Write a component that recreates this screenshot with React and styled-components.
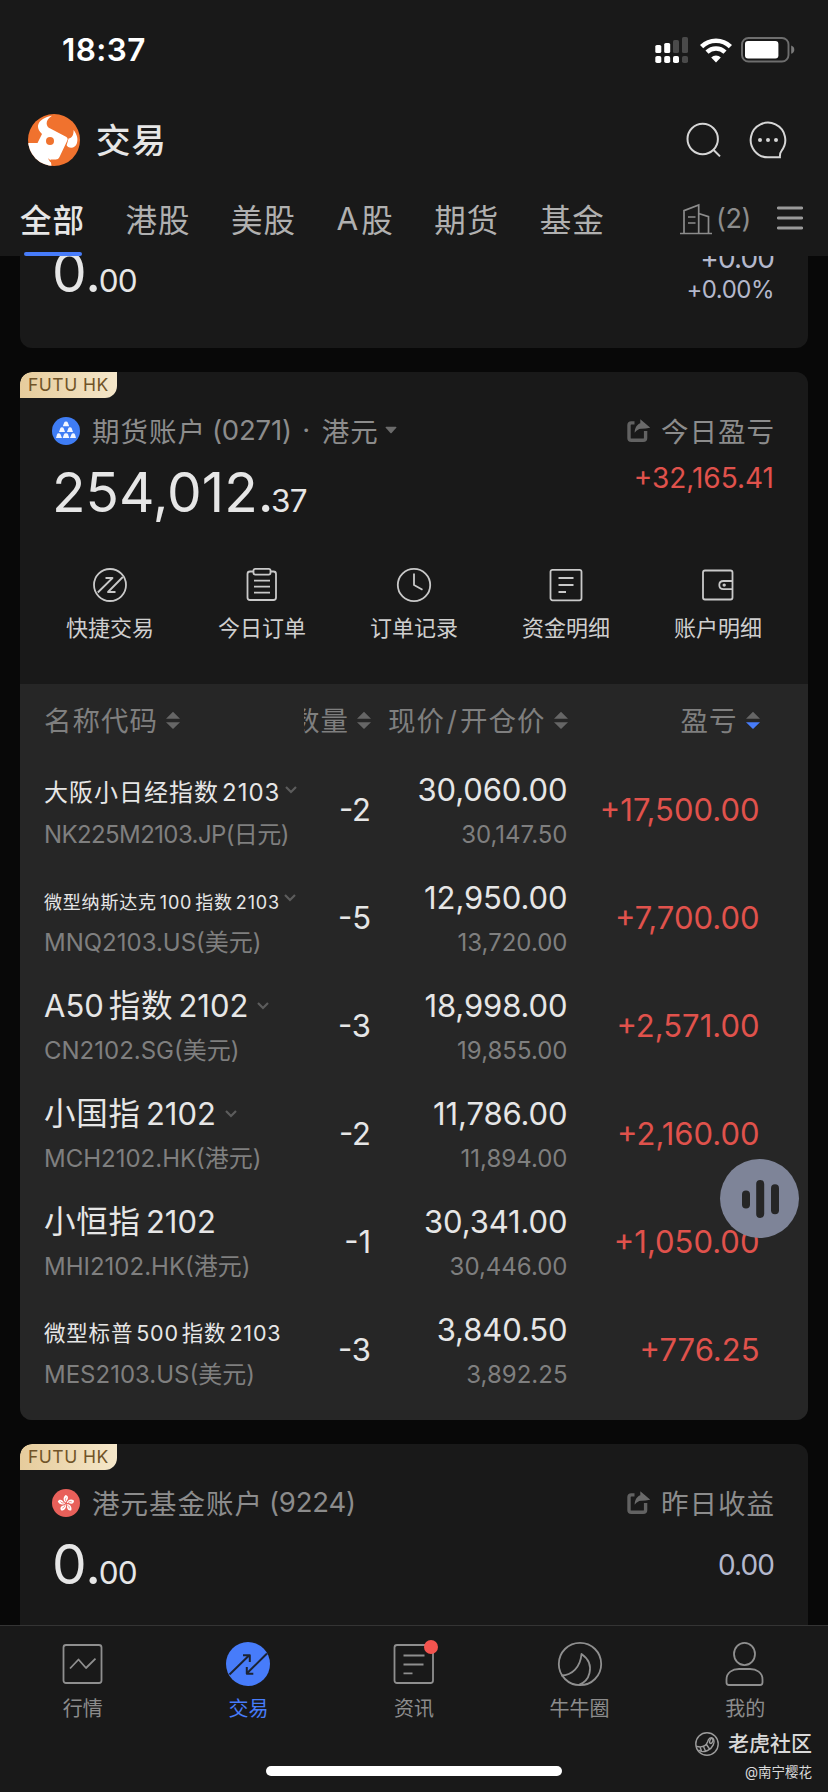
import React from 'react'
import styled, { createGlobalStyle, css } from 'styled-components'

const colours = {
  page: '#080808',
  panel: '#191919',
  table: '#262626',
  text: '#e6e6e6',
  muted: '#8c8c8c',
  flat: '#b4b8cc',
  up: '#e0524c',
  accent: '#477cfa',
}

const positions = [
  { name: '大阪小日经指数2103', size: 24, gap: 3, spacing: 1, menu: true, code: 'NK225M2103.JP(日元)', tight: true, qty: '-2', price: '30,060.00', cost: '30,147.50', pnl: '+17,500.00' },
  { name: '微型纳斯达克100指数2103', size: 18, gap: 3, spacing: 0.8, menu: true, code: 'MNQ2103.US(美元)', qty: '-5', price: '12,950.00', cost: '13,720.00', pnl: '+7,700.00' },
  { name: 'A50指数2102', size: 31.5, gap: 5, spacing: 0.8, menu: true, code: 'CN2102.SG(美元)', qty: '-3', price: '18,998.00', cost: '19,855.00', pnl: '+2,571.00' },
  { name: '小国指2102', size: 31.5, gap: 5, spacing: 0.8, menu: true, code: 'MCH2102.HK(港元)', qty: '-2', price: '11,786.00', cost: '11,894.00', pnl: '+2,160.00' },
  { name: '小恒指2102', size: 31.5, gap: 5, spacing: 0.8, menu: false, code: 'MHI2102.HK(港元)', qty: '-1', price: '30,341.00', cost: '30,446.00', pnl: '+1,050.00' },
  { name: '微型标普500指数2103', size: 21.5, gap: 3, spacing: 0.8, menu: false, code: 'MES2103.US(美元)', qty: '-3', price: '3,840.50', cost: '3,892.25', pnl: '+776.25' },
]

// puts a little air between chinese characters and the digits beside them
const MixedText = ({ children, gap, large }) => (
  children.split(/([\x20-\x7e]+)/).filter(Boolean).map((run, i) => (
    /^[\x20-\x7e]/.test(run) ? <Latin key={i} $gap={gap} $large={large} $first={i === 0}>{run}</Latin> : <span key={i}>{run}</span>
  ))
)

const SignalIcon = () => (
  <svg width="34" height="28" viewBox="0 0 34 28" fill="#fff">
    <rect x="0.3" y="9" width="6" height="8" rx="1.6" />
    <rect x="9.2" y="7" width="6" height="10" rx="1.6" />
    <rect x="18" y="4" width="6" height="13" rx="1.6" fill="#4a4a4a" />
    <rect x="27" y="1" width="6" height="16" rx="1.6" fill="#4a4a4a" />
    <rect x="0.3" y="20" width="6" height="7" rx="1.8" />
    <rect x="9.2" y="20" width="6" height="7" rx="1.8" />
    <rect x="18" y="20" width="6" height="7" rx="1.8" />
    <rect x="27" y="20" width="6" height="7" rx="1.8" fill="#4a4a4a" />
  </svg>
)

const WifiIcon = () => (
  <svg width="32" height="25" viewBox="0 0 32 25" fill="none" stroke="#fff" strokeWidth="4.6">
    <path d="M1.6 8.6a20.6 20.6 0 0 1 28.8 0" />
    <path d="M7 14.2a12.9 12.9 0 0 1 18 0" strokeWidth="4.4" />
    <path d="M16 24.4l-4.8-4.9a6.8 6.8 0 0 1 9.6 0z" fill="#fff" stroke="none" />
  </svg>
)

const BatteryIcon = () => (
  <svg width="54" height="26" viewBox="0 0 54 26">
    <rect x="1" y="1" width="46.5" height="23.5" rx="6.5" fill="none" stroke="#6e6e6e" strokeWidth="1.9" />
    <rect x="4" y="4" width="33.4" height="17.4" rx="3" fill="#fff" />
    <path d="M50.2 8.6c2 .6 3.1 2.2 3.1 4.1s-1.1 3.5-3.1 4.1z" fill="#7a7a7a" />
  </svg>
)

const BullLogo = () => (
  <svg width="52" height="52" viewBox="0 0 52 52">
    <clipPath id="bull"><circle cx="26" cy="26" r="26" /></clipPath>
    <g clipPath="url(#bull)">
      <rect width="52" height="52" fill="#f0722e" />
      <path d="M0 29h9.5l4.5-9C10.5 17 9.3 13.5 10.3 10.5C11.5 6 17 3 24 1.7c-4.5 2.8-6.5 6.8-4.7 10.3c.6 1.3 1.5 2 3 2.6L38 22.8c1.5.8 2 2.2 1.3 3.7L31.5 43c-.8 1.7-2 2.5-3.7 2.5H22.5L23.7 53H0z" fill="#fff" />
      <path d="M40.6 24.6c3.2-.6 5.3-3.6 4.9-8.6c3.5 4.2 4.8 9 3.4 13.2c-1.3 4-5 5.5-8.8 3.8l-1.5-1.8z" fill="#fff" />
      <path d="M20 44c1.5 2.3 4.5 3 8 2.2l-2.5 2.8c-2.6.2-4.5-1.8-5.5-5z" fill="#f0722e" />
      <circle cx="22" cy="27" r="4" fill="#f0722e" />
    </g>
  </svg>
)

const SearchIcon = () => (
  <svg width="36" height="36" viewBox="0 0 36 36" fill="none" stroke="#d6d6d6" strokeWidth="2">
    <circle cx="16.7" cy="17" r="15.2" />
    <path d="M27.6 28l6.4 6.4" />
  </svg>
)

const ChatIcon = () => (
  <svg width="38" height="38" viewBox="0 0 38 38" fill="none" stroke="#d6d6d6" strokeWidth="2">
    <path d="M19 36.3A17.3 17.3 0 1 1 32.5 29.8q-1.8 2-1.6 6.5z" />
    <g fill="#d6d6d6" stroke="none">
      <circle cx="11" cy="19" r="2" />
      <circle cx="19" cy="19" r="2" />
      <circle cx="27" cy="19" r="2" />
    </g>
  </svg>
)

const BuildingIcon = () => (
  <svg width="32" height="32" viewBox="0 0 32 32" fill="none" stroke="#8c8c8c" strokeWidth="1.7">
    <path d="M0 30.5h32M4 30V7.6L18.7 2v28M18.7 10.5l9.8 3.2V30M8 14h7.5M8 20h7.5" />
  </svg>
)

const MenuIcon = () => (
  <svg width="26" height="24" viewBox="0 0 26 24" stroke="#9a9a9a" strokeWidth="2.8" strokeLinecap="round">
    <path d="M1.3 2h23.4M1.3 12h23.4M1.3 22h23.4" />
  </svg>
)

const IngotsIcon = () => (
  <svg width="28" height="28" viewBox="0 0 28 28">
    <circle cx="14" cy="14" r="14" fill="#3f7df5" />
    <g fill="#f2f6ff">
      <path d="M10.8 9.3l1.3-3.6q.4-1.3 1.9-1.3t1.9 1.3l1.3 3.6z" />
      <path d="M7 15l1.2-3.6q.4-1.2 1.8-1.2t1.8 1.2L13 15z" />
      <path d="M15 15l1.2-3.6q.4-1.2 1.8-1.2t1.8 1.2L21 15z" />
      <path d="M4 21l1-3.4q.4-1.3 1.8-1.3T8.6 17.6L10 21z" />
      <path d="M10.7 21l1.2-3.4q.4-1.3 2.1-1.3t2.1 1.3L17.3 21z" />
      <path d="M18 21l1.4-3.4q.4-1.3 1.8-1.3t1.8 1.3L24 21z" />
    </g>
  </svg>
)

const FlowerIcon = () => (
  <svg width="28" height="28" viewBox="0 0 28 28">
    <circle cx="14" cy="14" r="14" fill="#e8605a" />
    {[0, 72, 144, 216, 288].map(deg => (
      <g key={deg} transform={`rotate(${deg} 14 14.5)`}>
        <path d="M14 13.6c-2.8-1.2-3.4-5.2-.4-7.6c1.7.3 2.8 1.8 2.3 3.6c-.4 1.5-1.7 2-1.9 4z" fill="#fff" />
        <path d="M13.9 12.3c-.8-1.3-.6-2.6.3-3.7" stroke="#e8605a" strokeWidth="0.7" fill="none" />
      </g>
    ))}
  </svg>
)

const ShareIcon = () => (
  <svg width="24" height="24" viewBox="0 0 24 24" fill="none">
    <path d="M8.5 3.9H5.3q-2.3 0-2.3 2.3v12.8q0 2.3 2.3 2.3h12q2.3 0 2.3-2.3v-7" stroke="#626262" strokeWidth="3.4" />
    <path d="M14.3 0.3L24.3 8.8q-5.3 1-9.3.9q-3.6.3-6.3 4C8.7 9.5 10.6 5.6 14.3 4.3z" fill="#6a6a6a" />
  </svg>
)

const Caret = () => (
  <svg width="12" height="8" viewBox="0 0 12 8" fill="#6b6b6b"><path d="M0.5 1.5q0-.7.8-.7h9.4q.8 0 .8.7L6.6 7q-.6.6-1.2 0z" /></svg>
)

const SortIcon = ({ desc }) => (
  <svg width="14" height="19" viewBox="0 0 14 19">
    <path d="M7 0.8l7 6.9H0z" fill="#666" />
    <path d="M7 18l7-6.8H0z" fill={desc ? colours.accent : '#666'} />
  </svg>
)

const ChevronIcon = () => (
  <svg width="12" height="8" viewBox="0 0 12 8" fill="none" stroke="#5c5c5c" strokeWidth="2.2"><path d="M1 1l5 5 5-5" /></svg>
)

const ActionIcon = ({ children }) => (
  <svg width="36" height="36" viewBox="0 0 36 36" fill="none" stroke="#c9c9c9" strokeWidth="1.8" strokeLinejoin="round">{children}</svg>
)

const actions = [
  { label: '快捷交易', icon: <><circle cx="18" cy="18" r="16" /><path d="M5.8 25.5L20.5 11h-7M30.8 10L16 25h7.5" /></> },
  { label: '今日订单', icon: <><path d="M10 4.5H6q-2.5 0-2.5 2.5v23.5q0 2.5 2.5 2.5h23.5q2.5 0 2.5-2.5V7q0-2.5-2.5-2.5H26" /><rect x="9.5" y="1.8" width="17" height="5.8" rx="1.8" /><path d="M10 13.7h16M10 19.7h16M10 25.7h16" /></> },
  { label: '订单记录', icon: <><circle cx="18" cy="18" r="16.2" /><path d="M18 6.5V18l8.5 4.8" /></> },
  { label: '资金明细', icon: <><rect x="2.5" y="2.8" width="31" height="30.5" rx="2" /><path d="M10.5 11h15M10.5 18h15M10.5 25h7.5" /></> },
  { label: '账户明细', icon: <><path d="M32.5 14.5V5.5q0-2-2-2H5q-2 0-2 2v25q0 2 2 2h25.5q2 0 2-2v-8.5M32.5 14h-9q-4.2 0-4.2 4.1t4.2 4.1h9zM32.5 14v8" /><circle cx="24.2" cy="18.1" r="0.8" fill="#c9c9c9" /></> },
]

const navItems = [
  { label: '行情', icon: <><rect x="2.5" y="3" width="38" height="38" rx="2.5" /><path d="M9 26.5l8.5-9 7.5 8.5 9.5-9.3" /></> },
  { label: '交易', active: true, icon: <><circle cx="22" cy="22" r="22" fill={colours.accent} stroke="none" /><path d="M3.5 32.5L23.5 13M17 13.2h6.8v6.8M41 11.5L21 31.3M20.8 25v6.8h6.5" stroke="#1c2333" strokeWidth="2" /></> },
  { label: '资讯', badge: true, icon: <><rect x="2.5" y="3" width="38.5" height="38" rx="2.5" /><path d="M11.5 13.5h21M11.5 22.5h20M11.5 31.3h9" /></> },
  { label: '牛牛圈', icon: <><circle cx="22" cy="22" r="21.2" /><path d="M3.3 33.5C14 33.5 22.5 25 23.5 12C30 16.5 33.5 22.5 31.5 31C30 37.5 26.5 41 20.5 43" /></> },
  { label: '我的', icon: <><ellipse cx="21.5" cy="12" rx="10.5" ry="11.2" /><path d="M6 43q-2.5 0-2.5-2.5v-3C3.5 30.5 9.5 27 16 27h11C33.5 27 39.5 30.5 39.5 37.5v3q0 2.5-2.5 2.5z" /></> },
]

const AccountHead = ({ icon, title, caret, label }) => (
  <Head>
    {icon}
    <HeadTitle>{title}{caret && <Caret />}</HeadTitle>
    <HeadLabel><ShareIcon /><span>{label}</span></HeadLabel>
  </Head>
)

const Money = ({ whole, cents }) => (
  <Amount>{whole}.<Cents>{cents}</Cents></Amount>
)

const App = () => (
  <Screen>
    <GlobalStyle />
    <Header>
      <StatusBar>
        <Clock>18:37</Clock>
        <SignalIcon />
        <WifiIcon />
        <BatteryIcon />
      </StatusBar>
      <TitleBar>
        <BullLogo />
        <Title>交易</Title>
        <SearchIcon />
        <ChatIcon />
      </TitleBar>
      <Tabs>
        <Tab $active>全部</Tab>
        <Tab>港股</Tab>
        <Tab>美股</Tab>
        <Tab><TabLetter>A</TabLetter>股</Tab>
        <Tab>期货</Tab>
        <Tab>基金</Tab>
        <Brokers><BuildingIcon /><span>(2)</span></Brokers>
        <MenuIcon />
      </Tabs>
    </Header>

    <Content>
      <Card $cut>
        <Balance>
          <Money whole="0" cents="00" />
          <Change>
            <ChangeValue>+0.00</ChangeValue>
            <ChangeRate>+0.00%</ChangeRate>
          </Change>
        </Balance>
      </Card>

      <Card>
        <Badge>FUTU HK</Badge>
        <AccountHead
          icon={<IngotsIcon />}
          title={<>期货账户<HeadCode>(0271)</HeadCode><Dot>·</Dot>港元</>}
          caret
          label="今日盈亏"
        />
        <Balance>
          <Money whole="254,012" cents="37" />
          <ChangeValue $up>+32,165.41</ChangeValue>
        </Balance>
        <Actions>
          {actions.map(({ label, icon }) => (
            <Action key={label}>
              <ActionIcon>{icon}</ActionIcon>
              <span>{label}</span>
            </Action>
          ))}
        </Actions>
        <Table>
          <TableHead>
            <HeadCell>名称代码<SortIcon /></HeadCell>
            <HeadCell $right><Clipped>数量</Clipped><SortIcon /></HeadCell>
            <HeadCell $right><span>现价<Slash>/</Slash>开仓价</span><SortIcon /></HeadCell>
            <HeadCell $right>盈亏<SortIcon desc /></HeadCell>
          </TableHead>
          {positions.map(item => (
            <Row key={item.code}>
              <Stack>
                <Name $size={item.size} $spacing={item.spacing}>
                  <span><MixedText gap={item.gap} large={item.size > 30}>{item.name}</MixedText></span>
                  {item.menu && <ChevronIcon />}
                </Name>
                <Code $tight={item.tight}>{item.code}</Code>
              </Stack>
              <Figure>{item.qty}</Figure>
              <Stack $right>
                <Price>{item.price}</Price>
                <Code>{item.cost}</Code>
              </Stack>
              <Figure $up>{item.pnl}</Figure>
            </Row>
          ))}
        </Table>
      </Card>

      <Card $open>
        <Badge>FUTU HK</Badge>
        <AccountHead
          icon={<FlowerIcon />}
          title={<>港元基金账户<HeadCode>(9224)</HeadCode></>}
          label="昨日收益"
        />
        <Balance>
          <Money whole="0" cents="00" />
          <ChangeValue $low>0.00</ChangeValue>
        </Balance>
      </Card>
    </Content>

    <Nav>
      {navItems.map(({ label, icon, active, badge }) => (
        <NavItem key={label} $active={active}>
          <NavIcon>
            <svg width="44" height="44" viewBox="0 0 44 44" fill="none" stroke="#8f8f8f" strokeWidth="1.8" strokeLinejoin="round" overflow="visible">{icon}</svg>
            {badge && <RedDot />}
          </NavIcon>
          <span>{label}</span>
        </NavItem>
      ))}
    </Nav>

    <Floating>
      <svg width="40" height="40" viewBox="0 0 40 40" fill="#262626">
        <rect x="2" y="11.5" width="8" height="18" rx="4" />
        <rect x="16.2" y="1" width="8" height="38" rx="4" />
        <rect x="31" y="5.3" width="8" height="30" rx="4" />
      </svg>
    </Floating>
    <HomeIndicator />
    <Watermark>
      <WatermarkName>
        <svg width="24" height="24" viewBox="0 0 24 24" fill="none" stroke="#9c9c9c" strokeWidth="1.4">
          <circle cx="12" cy="12" r="11.2" />
          <path d="M2 14.5C7 15.5 11 14 12.5 10C13.5 6.5 16 4.5 18 6.5C20.5 10 18 16 12.5 18.5C9 20 5.5 19.8 3.5 18M5 15l1.5 4M8.5 14.5l2 4.5M11.5 12.5l3 4.5" />
          <ellipse cx="16.3" cy="9" rx="1.5" ry="2.5" transform="rotate(20 16.3 9)" />
        </svg>
        老虎社区
      </WatermarkName>
      <span>@南宁樱花</span>
    </Watermark>
  </Screen>
)

const GlobalStyle = createGlobalStyle`
  * {
    box-sizing: border-box;
  }

  body {
    margin: 0;
    background: ${colours.page};
    color: ${colours.text};
    font-family: Inter, 'Noto Sans CJK SC', sans-serif;
  }

  svg {
    display: block;
    flex: none;
  }
`

const Screen = styled.div`
  position: relative;
  display: flex;
  flex-direction: column;
  width: 828px;
  height: 1792px;
  overflow: hidden;
  white-space: nowrap;
`

const Header = styled.header`
  flex: none;
  height: 256px;
  background: ${colours.panel};
`

const StatusBar = styled.div`
  display: flex;
  align-items: center;
  height: 100px;
  padding: 0 33px 0 62px;
`

const Clock = styled.div`
  margin-right: auto;
  padding-bottom: 2px;
  color: #fff;
  font-size: 31.5px;
  font-weight: 600;
  letter-spacing: 0.4px;

  & + svg {
    margin-right: 11px;
  }

  & + svg + svg {
    margin-right: 9px;
  }
`

const TitleBar = styled.div`
  display: flex;
  align-items: center;
  height: 80px;
  padding: 0 41px 0 28px;
  gap: 27px;
`

const Title = styled.h1`
  margin: 0 auto 0 -11px;
  padding-bottom: 5px;
  font-size: 34.5px;
  font-weight: 500;
  letter-spacing: 1px;
`

const Tabs = styled.nav`
  display: flex;
  align-items: center;
  height: 76px;
  padding: 0 25px 0 20px;
`

const Tab = styled.div`
  display: flex;
  align-items: center;
  height: 76px;
  margin-right: 40.5px;
  color: #b0b0b0;
  font-size: 31.5px;
  letter-spacing: 1px;

  ${({ $active }) => $active && css`
    color: ${colours.text};
    font-weight: 500;

    &::after {
      content: '';
      align-self: flex-end;
      flex: none;
      width: 58px;
      height: 4px;
      margin: 0 3px 0 -61px;
      border-radius: 2px;
      background: ${colours.accent};
    }
  `}
`

const TabLetter = styled.span`
  margin-right: 2px;
`

const Brokers = styled.div`
  display: flex;
  align-items: center;
  gap: 4px;
  margin-left: auto;
  margin-right: 26px;
  padding-top: 1px;
  color: ${colours.muted};
  font-size: 27px;
  letter-spacing: -0.4px;
`

const Content = styled.main`
  flex: 1;
  min-height: 0;
  padding: 0 20px;
  overflow: hidden;
`

const Card = styled.section`
  margin-bottom: 24px;
  border-radius: 12px;
  background: ${colours.panel};
  overflow: hidden;

  ${({ $cut }) => $cut && css`
    height: 92px;
    border-radius: 0 0 12px 12px;

    & > * {
      margin-top: -12px;
    }
  `}

  ${({ $open }) => $open && css`
    height: 200px;
  `}
`

const Badge = styled.div`
  width: 97px;
  height: 26px;
  padding-left: 8px;
  border-radius: 12px 0 12px 0;
  background: linear-gradient(90deg, #e6cc9c, #f5e7ca);
  color: #705428;
  font-size: 17.5px;
  line-height: 26px;
  letter-spacing: 0.5px;
`

const Head = styled.div`
  display: flex;
  align-items: center;
  height: 66px;
  padding: 0 33px 0 32px;
  color: ${colours.muted};
  font-size: 27.5px;
  letter-spacing: 1px;
`

const HeadTitle = styled.div`
  display: flex;
  align-items: center;
  margin: 0 auto 0 12px;
  padding-bottom: 2px;

  svg {
    margin-left: 6px;
  }
`

const HeadCode = styled.span`
  margin-left: 6px;
  letter-spacing: -0.2px;
`

const Dot = styled.span`
  width: 30px;
  text-align: center;
`

const HeadLabel = styled.div`
  display: flex;
  align-items: center;
  gap: 11px;

  span {
    padding-bottom: 2px;
  }
`

const Balance = styled.div`
  display: flex;
  justify-content: space-between;
  height: 100px;
  padding: 0 34px 0 32px;
`

const Amount = styled.div`
  font-size: 55px;
  line-height: 56px;
`

const Cents = styled.span`
  margin-left: -2.5px;
  font-size: 31.5px;
  letter-spacing: -0.8px;
`

const Change = styled.div`
  display: flex;
  flex-direction: column;
  align-items: flex-end;
`

const ChangeValue = styled.div`
  padding-top: ${({ $low }) => $low ? '15px' : '0'};
  color: ${({ $up }) => $up ? colours.up : colours.flat};
  font-size: 28px;
  line-height: 28px;
  letter-spacing: ${({ $up }) => $up ? '0' : '-0.9px'};
`

const ChangeRate = styled.div`
  color: ${colours.flat};
  font-size: 24px;
  line-height: 35px;
  letter-spacing: -0.5px;
`

const Actions = styled.div`
  display: grid;
  grid-template-columns: repeat(5, 1fr);
  height: 120px;
  padding: 3px 14px 0;
`

const Action = styled.div`
  display: flex;
  flex-direction: column;
  align-items: center;
  gap: 10px;
  font-size: 22px;
  line-height: 30px;
  color: #cfcfcf;
`

const Table = styled.div`
  height: 736px;
  background: ${colours.table};
`

const columns = css`
  display: grid;
  grid-template-columns: 260px 67px 196.5px 192px;
  align-items: center;
  padding-left: 24px;
`

const TableHead = styled.div`
  ${columns}
  height: 72px;
`

const HeadCell = styled.div`
  display: flex;
  align-items: center;
  justify-content: ${({ $right }) => $right ? 'flex-end' : 'flex-start'};
  gap: 8px;
  padding-bottom: 2px;
  color: #7f7f7f;
  font-size: 27.5px;
  letter-spacing: 1px;

  svg {
    margin-top: 2px;
  }
`

// the quantity heading is wider than its column and loses its left edge
const Clipped = styled.span`
  display: flex;
  justify-content: flex-end;
  width: 45px;
  overflow: hidden;
`

const Slash = styled.span`
  margin: 0 2px;
`

const Row = styled.div`
  ${columns}
  height: 108px;
`

const Stack = styled.div`
  display: flex;
  flex-direction: column;
  align-self: start;
  align-items: ${({ $right }) => $right ? 'flex-end' : 'flex-start'};
  padding-top: 10px;
`

// every name sits on the same baseline whatever its size
const Name = styled.div`
  display: flex;
  align-items: baseline;
  height: 47px;
  font-size: ${({ $size }) => $size}px;
  line-height: 1.1;
  letter-spacing: ${({ $spacing }) => $spacing}px;

  &::before {
    content: '';
    height: 35px;
  }

  svg {
    align-self: center;
    margin-left: ${({ $size }) => $size > 30 ? '9px' : '4.5px'};
  }
`

const Latin = styled.span`
  margin: 0 ${({ $gap }) => $gap}px 0 ${({ $gap, $first }) => $first ? 0 : $gap}px;
  font-size: ${({ $large }) => $large ? '31px' : 'inherit'};
  letter-spacing: ${({ $large }) => $large ? '0' : 'inherit'};

  &:last-child {
    margin-right: 0;
  }
`

const Price = styled.div`
  font-size: 31px;
  line-height: 47px;
  letter-spacing: -0.1px;
`

const Code = styled.div`
  color: #7f7f7f;
  font-size: 24px;
  line-height: 43.5px;
  letter-spacing: ${({ $tight }) => $tight ? '-0.6px' : '0'};
`

const Figure = styled.div`
  padding-bottom: 2px;
  color: ${({ $up }) => $up ? colours.up : colours.text};
  font-size: 31px;
  text-align: right;
`

const Nav = styled.nav`
  flex: none;
  display: grid;
  grid-template-columns: repeat(5, 1fr);
  height: 167px;
  border-top: 1px solid #343434;
  background: ${colours.panel};
`

const NavItem = styled.div`
  display: flex;
  flex-direction: column;
  align-items: center;
  gap: 8px;
  padding-top: 16px;
  color: ${({ $active }) => $active ? colours.accent : colours.muted};
  font-size: 20px;
  line-height: 30px;
`

const NavIcon = styled.div`
  position: relative;
`

const RedDot = styled.i`
  position: absolute;
  top: -2px;
  right: -2px;
  width: 14px;
  height: 14px;
  border-radius: 50%;
  background: #f5544f;
`

const Floating = styled.button`
  position: absolute;
  top: 1159px;
  left: 720px;
  display: flex;
  align-items: center;
  justify-content: center;
  width: 79px;
  height: 79px;
  padding: 0;
  border: 0;
  border-radius: 50%;
  background: #7e8498;
`

const HomeIndicator = styled.div`
  position: absolute;
  bottom: 16px;
  left: 266px;
  width: 296px;
  height: 10px;
  border-radius: 5px;
  background: #fff;
`

const Watermark = styled.div`
  position: absolute;
  right: 16px;
  bottom: 10px;
  display: flex;
  flex-direction: column;
  align-items: flex-end;
  color: #d9d9d9;
  font-size: 13.5px;
  line-height: 20px;
`

const WatermarkName = styled.div`
  display: flex;
  align-items: center;
  gap: 9px;
  font-size: 21px;
  font-weight: 500;
  line-height: 36px;
`

export default App
